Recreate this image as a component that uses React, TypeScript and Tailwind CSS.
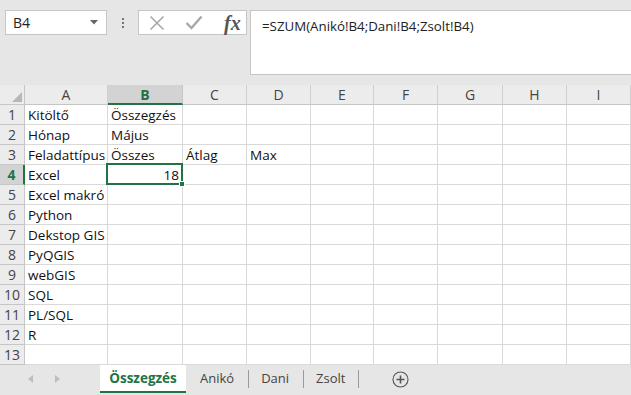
import React from "react";

const cols = ["A", "B", "C", "D", "E", "F", "G", "H", "I"];

const data: Record<string, string> = {
  A1: "Kitöltő",
  B1: "Összegzés",
  A2: "Hónap",
  B2: "Május",
  A3: "Feladattípus",
  B3: "Összes",
  C3: "Átlag",
  D3: "Max",
  A4: "Excel",
  B4: "18",
  A5: "Excel makró",
  A6: "Python",
  A7: "Dekstop GIS",
  A8: "PyQGIS",
  A9: "webGIS",
  A10: "SQL",
  A11: "PL/SQL",
  A12: "R",
};

const font = { fontFamily: '"Open Sans", "Noto Sans", sans-serif' };

function Toolbar() {
  return (
    <div className="flex h-[85px] shrink-0 items-start bg-[#e6e6e6] pt-[10px]">
      <div className="ml-[5px] flex h-[25px] w-[102px] items-center justify-between border border-[#c6c6c6] bg-white pl-[7px] pr-[8px]">
        <span className="text-[14px] text-[#222]">B4</span>
        <svg width="8" height="5" viewBox="0 0 8 5">
          <path d="M0 0 L8 0 L4 4.5 Z" fill="#666" />
        </svg>
      </div>
      <div className="flex h-[25px] w-[31px] flex-col items-center justify-center gap-[2px]">
        <span className="h-[2px] w-[2px] bg-[#777]" />
        <span className="h-[2px] w-[2px] bg-[#777]" />
        <span className="h-[2px] w-[2px] bg-[#777]" />
      </div>
      <div className="flex h-[25px] w-[109px] items-center border border-[#c6c6c6] bg-white pl-[10px]">
        <svg width="16" height="16" viewBox="0 0 16 16">
          <path d="M1.5 1.5 L14.5 14.5 M14.5 1.5 L1.5 14.5" stroke="#a8a8a8" strokeWidth="1.6" fill="none" />
        </svg>
        <svg className="ml-[20px]" width="18" height="15" viewBox="0 0 18 15">
          <path d="M1.5 8 L6.5 13 L16.5 1.5" stroke="#a8a8a8" strokeWidth="2.4" fill="none" />
        </svg>
        <span
          className="ml-[21px] text-[20px] font-bold italic leading-none text-[#555]"
          style={{ fontFamily: '"Liberation Serif", serif' }}
        >
          fx
        </span>
      </div>
      <div className="ml-[3px] h-[65px] flex-1 border-y border-l border-[#c6c6c6] bg-white pl-[11px] pt-[2px]">
        <span className="text-[13.3px] text-[#222]">=SZUM(Anikó!B4;Dani!B4;Zsolt!B4)</span>
      </div>
    </div>
  );
}

function Grid() {
  return (
    <div className="grid grid-cols-[25px_83px_75px_64px_64px_63px_64px_65px_64px_64px] grid-rows-[20px_repeat(13,20px)] bg-white">
      <div className="flex items-end justify-end border-r border-b border-[#c6c6c6] bg-[#ececec] pb-[2px] pr-[2px]">
        <svg width="10" height="10" viewBox="0 0 10 10">
          <path d="M10 0 L10 10 L0 10 Z" fill="#b7b7b7" />
        </svg>
      </div>
      {cols.map((c) => (
        <div
          key={c}
          className={
            c === "B"
              ? "flex items-center justify-center border-r border-b-2 border-r-[#c6c6c6] border-b-[#217346] bg-[#d3d3d3] text-[14px] font-bold text-[#217346]"
              : "flex items-center justify-center border-r border-b border-[#d0d0d0] border-b-[#c6c6c6] bg-[#ececec] text-[14px] text-[#444]"
          }
        >
          {c}
        </div>
      ))}
      {Array.from({ length: 13 }, (_, i) => i + 1).map((r) => (
        <React.Fragment key={r}>
          <div
            className={
              r === 4
                ? "flex items-center justify-center border-r-2 border-b border-r-[#217346] border-b-[#c6c6c6] bg-[#d3d3d3] text-[14px] font-bold text-[#217346]"
                : "flex items-center justify-center border-r border-b border-[#c6c6c6] bg-[#ececec] text-[14px] text-[#444]"
            }
          >
            {r}
          </div>
          {cols.map((c) => {
            const id = c + r;
            const v = data[id];
            const isNum = v !== undefined && /^\d+$/.test(v);
            return (
              <div
                key={id}
                className={
                  "relative flex items-center overflow-visible whitespace-nowrap border-r border-b border-[#d9d9d9] px-[3px] pt-[1px] text-[13.5px] text-[#111] " +
                  (isNum ? "justify-end" : "justify-start")
                }
              >
                <span className="relative z-10">{v}</span>
                {id === "B4" && (
                  <>
                    <div className="absolute -top-[2px] -left-[2px] -right-[1px] -bottom-[1px] border-2 border-[#217346]" />
                    <div className="absolute -right-[3px] -bottom-[3px] z-20 h-[6px] w-[6px] border border-white bg-[#217346]" />
                  </>
                )}
              </div>
            );
          })}
        </React.Fragment>
      ))}
    </div>
  );
}

function Tabs() {
  return (
    <div className="flex h-[30px] shrink-0 items-start bg-[#e6e6e6]">
      <div className="flex h-[28px] w-[100px] items-center pl-[28px]">
        <svg width="5" height="8" viewBox="0 0 5 8">
          <path d="M5 0 L5 8 L0 4 Z" fill="#bdbdbd" />
        </svg>
        <svg className="ml-[22px]" width="5" height="8" viewBox="0 0 5 8">
          <path d="M0 0 L0 8 L5 4 Z" fill="#bdbdbd" />
        </svg>
      </div>
      <div className="flex h-[28px] w-[86px] items-center justify-center border-b-2 border-[#217346] bg-white text-[13.5px] font-bold text-[#217346]">
        Összegzés
      </div>
      <div className="flex h-[28px] items-center text-[13px] text-[#444]">
        <span className="pl-[14px] pr-[14px]">Anikó</span>
        <span className="h-[18px] w-px bg-[#9a9a9a]" />
        <span className="pl-[12px] pr-[14px]">Dani</span>
        <span className="h-[18px] w-px bg-[#9a9a9a]" />
        <span className="pl-[12px] pr-[13px]">Zsolt</span>
        <span className="h-[18px] w-px bg-[#9a9a9a]" />
        <svg className="ml-[33px]" width="17" height="17" viewBox="0 0 17 17">
          <circle cx="8.5" cy="8.5" r="7.5" stroke="#555" strokeWidth="1.1" fill="none" />
          <path d="M8.5 4.5 L8.5 12.5 M4.5 8.5 L12.5 8.5" stroke="#555" strokeWidth="1.6" />
        </svg>
      </div>
    </div>
  );
}

export default function App() {
  return (
    <div className="flex h-[395px] w-[631px] flex-col overflow-hidden" style={font}>
      <Toolbar />
      <Grid />
      <Tabs />
    </div>
  );
}
